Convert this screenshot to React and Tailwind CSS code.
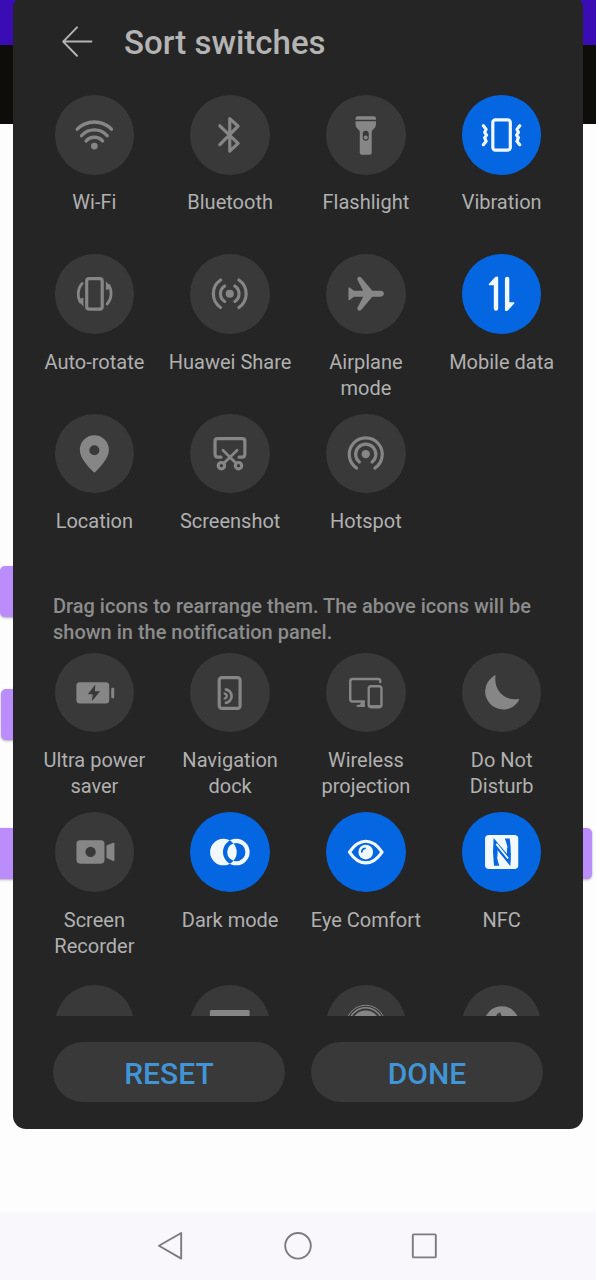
import React from 'react';

const stroke = { fill: 'none', stroke: 'currentColor', strokeWidth: 3.2, strokeLinecap: 'round', strokeLinejoin: 'round' };

const icons = {
  wifi: (
    <g {...stroke} strokeWidth="3.4">
      <path d="M22.4 34.4A24 24 0 0 1 56.8 34.4" />
      <path d="M26.7 41A17 17 0 0 1 52.5 41" />
      <path d="M31.4 46.2A11 11 0 0 1 47.8 46.2" />
      <circle cx="39.6" cy="51.4" r="3.4" fill="currentColor" stroke="none" />
    </g>
  ),
  bluetooth: <path {...stroke} strokeWidth="3.2" d="M30 31L48.4 48.6L40 56.4V23.8L48.4 31.4L30 50" />,
  flashlight: (
    <g fill="currentColor">
      <path d="M29.7 25V23.6Q29.7 21.4 32 21.4H48Q50.3 21.4 50.3 23.6V25Z" />
      <path fillRule="evenodd" d="M29.7 26.4H50.3V29.5Q50.3 32 48.3 33.8Q46 35.8 46 38V58Q46 60 44 60H36Q34 60 34 58V38Q34 35.8 31.7 33.8Q29.7 32 29.7 29.5ZM40 36A3 3 0 0 0 37 39V43A3 3 0 0 0 43 43V39A3 3 0 0 0 40 36Z" />
      <circle cx="40" cy="42.8" r="2" />
    </g>
  ),
  vibration: (
    <g {...stroke}>
      <rect x="31" y="25" width="17.6" height="30.4" rx="2.6" />
      <path strokeWidth="3.2" d="M21.5 31L24.3 34.6L22.8 37.6L24.7 40.3L22.8 43L24.3 46.6L21.5 50M58.1 31L55.3 34.6L56.8 37.6L54.9 40.3L56.8 43L55.3 46.6L58.1 50" />
    </g>
  ),
  rotate: (
    <g {...stroke}>
      <rect x="31.9" y="24.7" width="15.6" height="30.8" rx="2.4" />
      <path strokeWidth="2.8" d="M27.4 29.6C22.4 35 22.4 43 25.4 48.4M52.4 50.4C57.4 45 57.4 37 54.4 31.6" />
      <path fill="currentColor" stroke="none" d="M22.6 45.6L28.6 44V53ZM57.2 34.6L51.2 36.2V27.4Z" />
    </g>
  ),
  share: (
    <g {...stroke}>
      <circle cx="40" cy="40" r="4.1" fill="currentColor" stroke="none" />
      <path d="M34.9 32.2A9.3 9.3 0 0 0 34.9 47.8M45.1 32.2A9.3 9.3 0 0 1 45.1 47.8" />
      <path d="M30.8 26.2A16.7 16.7 0 0 0 30.8 53.8M49.2 26.2A16.7 16.7 0 0 1 49.2 53.8" />
    </g>
  ),
  airplane: (
    <path fill="currentColor" d="M22.6 34.2Q22.6 33 23.8 33.8L28.2 37.1H37.4L31.6 25.8Q31 23.6 33 23Q34.6 22.8 35.6 24L46.6 37.1H55Q58.2 37.4 58.2 40Q58.2 42.6 55 42.9H46.6L35.6 56Q34.6 57.2 33 57Q31 56.4 31.6 54.2L37.4 42.9H28.2L23.8 46.2Q22.6 47 22.6 45.8Z" />
  ),
  data: (
    <g fill="currentColor">
      <path d="M27 30.2L33.4 23.2Q36.4 21.6 36.4 24V55Q36.4 57 34.2 57Q32 57 32 55V31.5H27.6Q26.6 31.4 27 30.2Z" />
      <path d="M52.6 49.8L46.2 56.8Q43.2 58.4 43.2 56V25Q43.2 23 45.4 23Q47.6 23 47.6 25V48.5H52Q53 48.6 52.6 49.8Z" />
    </g>
  ),
  location: (
    <path fill="currentColor" fillRule="evenodd" d="M39.6 21.4A14.6 14.6 0 0 0 25 36C25 44.6 33 52.4 38.4 58.2Q39.6 59.4 40.8 58.2C46.2 52.4 54.2 44.6 54.2 36A14.6 14.6 0 0 0 39.6 21.4ZM39.6 31.4A5.1 5.1 0 1 1 39.6 41.6A5.1 5.1 0 1 1 39.6 31.4Z" />
  ),
  screenshot: (
    <g {...stroke}>
      <path d="M31.2 43.4H28.2Q25.2 43.4 25.2 40.4V27.4Q25.2 24.8 27.8 24.8H52.6Q55.2 24.8 55.2 27.4V40.4Q55.2 43.4 52.2 43.4H49.4" />
      <circle cx="31.6" cy="52" r="3.2" />
      <circle cx="48.8" cy="52" r="3.2" />
      <path strokeWidth="2.8" d="M33.2 36.4L46.4 49.6M47.4 36.4L34 49.6" />
    </g>
  ),
  hotspot: (
    <g {...stroke}>
      <circle cx="40" cy="40.4" r="4.2" fill="currentColor" stroke="none" />
      <path d="M33.6 48.4A10.2 10.2 0 1 1 46.4 48.4" />
      <path d="M30.8 54.4A16.6 16.6 0 1 1 49.2 54.4" />
    </g>
  ),
  battery: (
    <g fill="currentColor">
      <path fillRule="evenodd" d="M25 29.4H51Q54.6 29.4 54.6 33V47.2Q54.6 50.8 51 50.8H25Q21.5 50.8 21.5 47.2V33Q21.5 29.4 25 29.4ZM40.6 31.8L33 41.4H38L37 48.6L45.4 38.4H40.2Z" />
      <rect x="56.6" y="35" width="3" height="10.6" rx="1" />
    </g>
  ),
  dock: (
    <g {...stroke}>
      <rect x="29.4" y="24.8" width="21" height="31" rx="2.6" />
      <path strokeWidth="2.8" strokeLinecap="butt" d="M35 36.6A6.8 6.8 0 0 1 35 50.2" />
      <path strokeWidth="2.4" strokeLinecap="butt" d="M34 41A2.4 2.4 0 1 1 34 45.6" />
    </g>
  ),
  projection: (
    <g {...stroke} strokeWidth="2.4">
      <path d="M54.6 29.2V28Q54.6 26.2 52.6 26.2H26.6Q24.4 26.2 24.4 28.4V46.6Q24.4 48.8 26.6 48.8H38.2M32 53.2H38.2" />
      <path fill="currentColor" stroke="none" d="M35 48.8H39V53.6H33Q35 52.6 35 48.8Z" />
      <rect x="43" y="33.4" width="12.8" height="21.2" rx="2.4" />
      <path strokeLinecap="butt" d="M44 53.6H55" />
    </g>
  ),
  moon: <path fill="currentColor" d="M33 22.4Q24 28 23.3 38A18.2 18.2 0 0 0 41.5 56.8C49 56.8 55 52.6 57.4 46.8Q57.6 46 56.6 46.2C44 48.6 31.4 37.6 33.8 23Q33.8 22 33 22.4Z" />,
  recorder: (
    <g fill="currentColor">
      <path fillRule="evenodd" d="M25.2 28.4H46.2Q49.8 28.4 49.8 32V48.4Q49.8 52 46.2 52H25.2Q21.6 52 21.6 48.4V32Q21.6 28.4 25.2 28.4ZM35.8 35A5.2 5.2 0 1 1 35.8 45.4A5.2 5.2 0 1 1 35.8 35Z" />
      <path d="M51.8 33.8L58.6 31Q59.8 30.6 59.8 31.8V48.4Q59.8 49.6 58.6 49.2L51.8 46.4Z" />
    </g>
  ),
  dark: (
    <path fill="currentColor" fillRule="evenodd" d="M33.6 26.9A13.4 13.4 0 1 1 33.6 53.7A13.4 13.4 0 1 1 33.6 26.9ZM46.6 26.9A13.4 13.4 0 1 1 46.6 53.7A13.4 13.4 0 1 1 46.6 26.9ZM46.6 31.1A9.2 9.2 0 1 0 46.6 49.5A9.2 9.2 0 1 0 46.6 31.1Z" />
  ),
  eye: (
    <g {...stroke}>
      <path d="M23.6 40.3Q31 29.4 40 29.4T56.4 40.3Q49 51.2 40 51.2T23.6 40.3Z" />
      <circle cx="40" cy="40.3" r="7.4" fill="currentColor" stroke="none" />
      <path className="stroke-[#0566e2]" strokeWidth="1.6" d="M36 40.2Q36.2 37 39.4 36.6" />
    </g>
  ),
  nfc: (
    <g>
      <rect x="23.2" y="23.2" width="33.4" height="34.2" rx="3.8" fill="currentColor" />
      <g className="fill-[#0566e2]">
        <path d="M31.8 26.2L45.2 42V35.4L47.4 38.4V48.2L34.6 33.2Q34 45 37.6 54H32.2Q30.4 40 31.8 26.2Z" />
        <path d="M48.6 54.4L35.8 38.4V45.2L33.8 42.4V33L46.4 47.2Q47 35 43 26.6H48Q50 40 48.6 54.4Z" />
      </g>
      <path fill="none" stroke="currentColor" strokeWidth="1.8" d="M34.6 32L46.4 46.8" />
    </g>
  ),
  blank: null,
  card: <rect x="20" y="25.2" width="40" height="28" rx="1.5" fill="currentColor" />,
  rings: (
    <g {...stroke}>
      <circle cx="40" cy="40" r="19.6" strokeWidth="1" />
      <circle cx="40" cy="40" r="17" strokeWidth="1.5" />
      <circle cx="40" cy="40" r="14.4" fill="currentColor" stroke="none" />
    </g>
  ),
  globe: (
    <g>
      <circle cx="40" cy="39" r="17.6" fill="currentColor" />
      <path className="fill-[#393939]" d="M34 33Q34 29.4 37.6 27.6Q39.6 28 39.2 30L41.6 33Z" />
    </g>
  ),
};

const shown = [
  ['wifi', 'Wi-Fi'],
  ['bluetooth', 'Bluetooth'],
  ['flashlight', 'Flashlight'],
  ['vibration', 'Vibration', true],
  ['rotate', 'Auto-rotate'],
  ['share', 'Huawei Share'],
  ['airplane', 'Airplane mode'],
  ['data', 'Mobile data', true],
  ['location', 'Location'],
  ['screenshot', 'Screenshot'],
  ['hotspot', 'Hotspot'],
];

const available = [
  ['battery', 'Ultra power saver'],
  ['dock', 'Navigation dock'],
  ['projection', 'Wireless projection'],
  ['moon', 'Do Not Disturb'],
  ['recorder', 'Screen Recorder'],
  ['dark', 'Dark mode', true],
  ['eye', 'Eye Comfort', true],
  ['nfc', 'NFC', true],
];

const clipped = ['blank', 'card', 'rings', 'globe'];

function Disc({ icon, on }) {
  return (
    <div className={`size-[79.5px] shrink-0 rounded-full ${on ? 'bg-[#0566e2] text-[#f2f8ff]' : 'bg-[#393939] text-[#868686]'}`}>
      <svg viewBox="0 0 80 80" className="size-full">{icons[icon]}</svg>
    </div>
  );
}

function Switches({ items }) {
  return (
    <div className="grid auto-rows-[159.4px] grid-cols-4">
      {items.map(([icon, label, on]) => (
        <div key={label} className="flex flex-col items-center">
          <Disc icon={icon} on={on} />
          <span className="mt-[14.85px] max-w-[126px] text-center text-[20px] leading-[26px] text-[#b0b0b0]">{label}</span>
        </div>
      ))}
    </div>
  );
}

function Backdrop() {
  return (
    <div className="flex h-full flex-col bg-[#fefdfe]">
      <div className="h-[45px] bg-[#3a0cb4]" />
      <div className="h-[79px] bg-[#0e0d09]" />
      <div className="flex grow flex-col">
        <div className="mt-[442px] h-[51px] w-[300px] rounded-[5px] bg-[#bb8cfb] shadow-sm shadow-black/25" />
        <div className="mt-[72px] ml-px h-[51px] w-[300px] rounded-[5px] bg-[#bb8cfb] shadow-sm shadow-black/25" />
        <div className="mt-[88px] -ml-2 h-[51px] w-[600px] rounded-[5px] bg-[#bb8cfb] shadow-sm shadow-black/25" />
      </div>
      <div className="flex h-[68px] items-center justify-center gap-[98px] bg-[#faf7fc] text-[#7c7a7e]">
        <svg viewBox="0 0 28 28" className="size-7" fill="none" stroke="currentColor" strokeWidth="1.9" strokeLinejoin="round">
          <path d="M1 13.8L23.2 1V26.6Z" />
        </svg>
        <svg viewBox="0 0 28 28" className="size-7" fill="none" stroke="currentColor" strokeWidth="1.9">
          <circle cx="14" cy="13.8" r="12.8" />
        </svg>
        <svg viewBox="0 0 28 28" className="size-7" fill="none" stroke="currentColor" strokeWidth="1.9" strokeLinejoin="round">
          <rect x="2.8" y="2.4" width="23" height="23" rx="1" />
        </svg>
      </div>
    </div>
  );
}

export default function App() {
  return (
    <div className="relative h-[1280px] w-[596px] overflow-hidden font-['Roboto',sans-serif]">
      <Backdrop />
      <div className="absolute -top-[5px] left-[13px] flex h-[1133.5px] w-[570px] flex-col rounded-[13px] bg-[#252525] px-[13.5px]">
        <div className="flex h-[100px] items-center pb-[6px] pl-[34px]">
          <svg viewBox="0 0 34 34" className="size-[34px]" fill="none" stroke="#b4b4b4" strokeWidth="2" strokeLinecap="round" strokeLinejoin="round">
            <path d="M30.4 16.6H2.2M16 2.4L2.2 16.6L16 30.8" />
          </svg>
          <h1 className="ml-[29.6px] pt-[2px] text-[33px] leading-10 font-medium text-[#b4b4b4]">Sort switches</h1>
        </div>
        <div className="flex h-[920.5px] shrink-0 flex-col overflow-hidden">
          <Switches items={shown} />
          <p className="mt-5 mb-[7.6px] pl-[26.5px] text-[20px] leading-[26px] font-medium text-[#8c8c8c]">
            Drag icons to rearrange them. The above icons will be<br />shown in the notification panel.
          </p>
          <Switches items={available} />
          <div className="mt-[13.6px] grid grid-cols-4 justify-items-center">
            {clipped.map((icon) => <Disc key={icon} icon={icon} />)}
          </div>
        </div>
        <div className="mt-[26.5px] flex gap-[26px] px-[26.5px]">
          <button className="h-[60px] flex-1 rounded-full bg-[#393939] pt-[3px] text-[30px] leading-none font-medium text-[#4195d6]">RESET</button>
          <button className="h-[60px] flex-1 rounded-full bg-[#393939] pt-[3px] text-[30px] leading-none font-medium text-[#4195d6]">DONE</button>
        </div>
      </div>
    </div>
  );
}
